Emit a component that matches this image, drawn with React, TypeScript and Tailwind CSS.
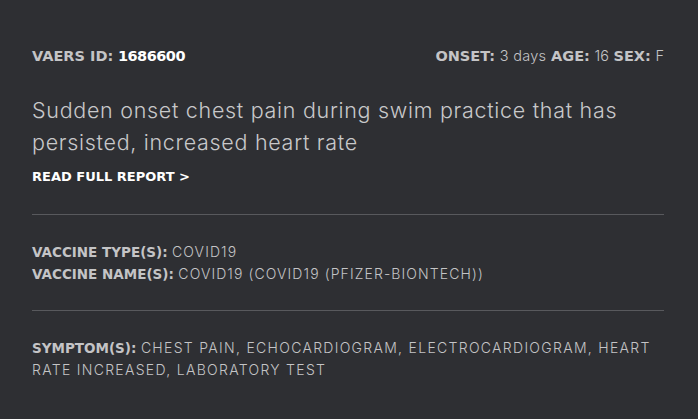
const light = { fontFamily: 'Inter, "DejaVu Sans", sans-serif' };

export default function App() {
  return (
    <div
      className="w-[698px] h-[419px] bg-[#2e2f33] px-[32px] pt-[46px] text-[#c4c4c6] overflow-hidden"
      style={{ fontFamily: '"DejaVu Sans", "Open Sans", sans-serif' }}
    >
      <div className="flex justify-between items-center text-[14.5px] leading-[20px] w-[632px]">
        <div>
          <span className="font-bold text-[#c4c4c6]">VAERS ID:</span>{" "}
          <span className="font-bold text-white tracking-[-0.5px]">1686600</span>
        </div>
        <div>
          <span className="font-bold">ONSET:</span>{" "}
          <span className="font-light tracking-[0.3px]" style={light}>3 days</span>{" "}
          <span className="font-bold">AGE:</span>{" "}
          <span className="font-light" style={light}>16</span>{" "}
          <span className="font-bold">SEX:</span>{" "}
          <span className="font-light" style={light}>F</span>
        </div>
      </div>
      <p
        className="mt-[28px] text-[21.5px] leading-[32px] font-light tracking-[0.7px] text-[#c8c8ca] w-[632px]"
        style={light}
      >
        Sudden onset chest pain during swim practice that has persisted, increased heart rate
      </p>
      <div className="mt-[9px] text-[13px] leading-[20px] font-bold text-white">READ FULL REPORT &gt;</div>
      <div className="mt-[27px] h-px w-[632px] bg-[#58595d]" />
      <div className="mt-[26px] text-[14px] leading-[21px] text-[#c4c4c6]">
        <div>
          <span className="font-bold text-[13.5px]">VACCINE TYPE(S):</span>{" "}
          <span className="font-light tracking-[1.1px]" style={light}>COVID19</span>
        </div>
        <div>
          <span className="font-bold text-[13.5px]">VACCINE NAME(S):</span>{" "}
          <span className="font-light tracking-[1.1px]" style={light}>
            COVID19 (COVID19 (PFIZER-BIONTECH))
          </span>
        </div>
      </div>
      <div className="mt-[25px] h-px w-[632px] bg-[#58595d]" />
      <div className="mt-[26px] text-[14px] leading-[21px] text-[#c4c4c6] w-[632px]">
        <span className="font-bold text-[13.5px]">SYMPTOM(S):</span>{" "}
        <span className="font-light tracking-[1.3px]" style={light}>
          CHEST PAIN, ECHOCARDIOGRAM, ELECTROCARDIOGRAM, HEART RATE INCREASED, LABORATORY TEST
        </span>
      </div>
    </div>
  );
}
